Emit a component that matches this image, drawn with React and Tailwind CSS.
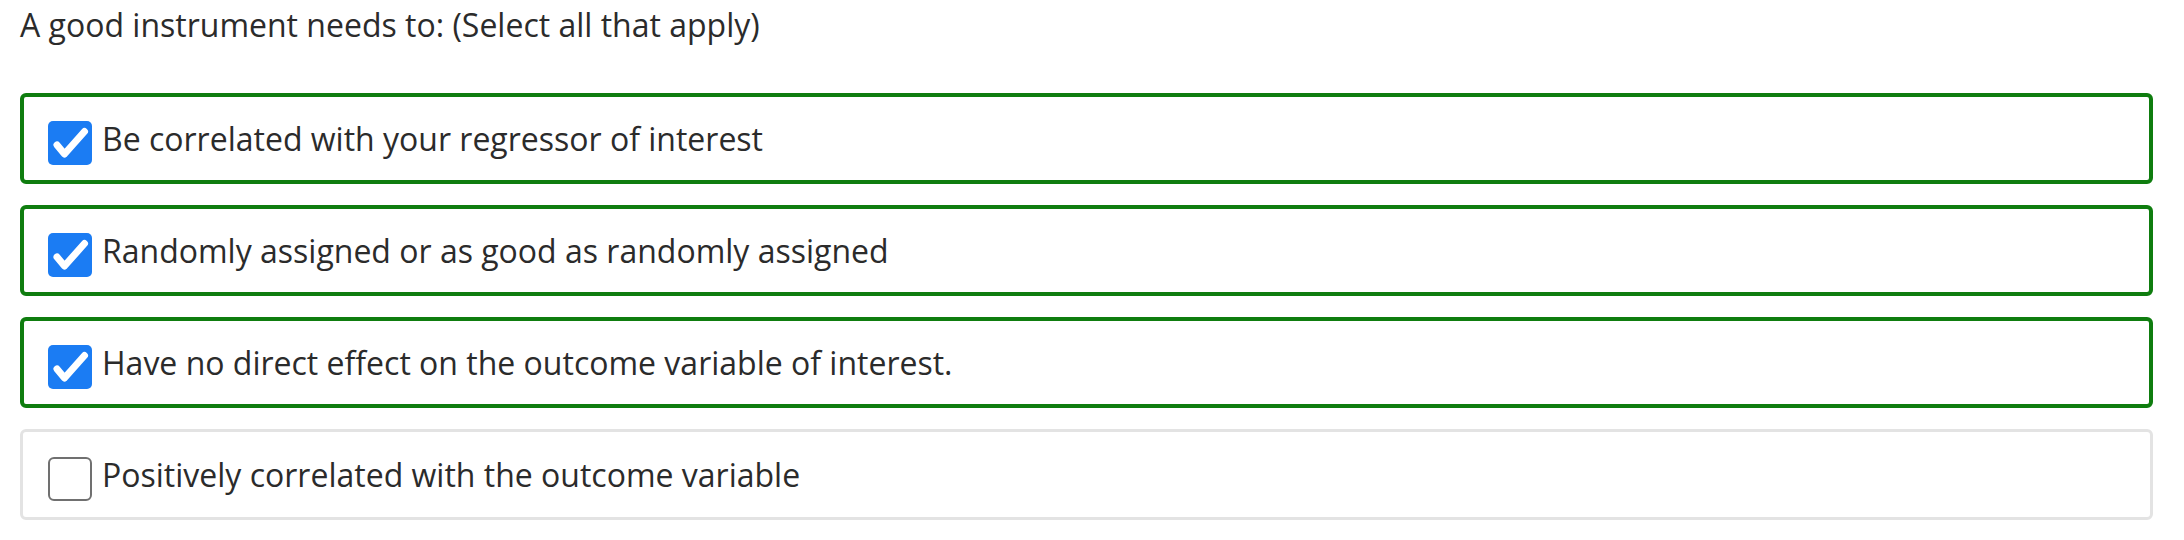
import React from 'react';

const options = [
  { label: 'Be correlated with your regressor of interest', checked: true },
  { label: 'Randomly assigned or as good as randomly assigned', checked: true },
  { label: 'Have no direct effect on the outcome variable of interest.', checked: true },
  { label: 'Positively correlated with the outcome variable', checked: false },
];

function Box({ checked }) {
  if (!checked) {
    return <span className="mt-[8px] h-[44px] w-[44px] shrink-0 rounded-[6px] border-2 border-[#707070] bg-white" />;
  }
  return (
    <span className="mt-[8px] block h-[44px] w-[44px] shrink-0 rounded-[5px] bg-[#1b7cf3]">
      <svg className="h-[44px] w-[44px]" viewBox="0 0 44 44" fill="none">
        <path d="M9 24l7.5 9L36.5 10.5" stroke="white" strokeWidth="7" strokeLinecap="round" strokeLinejoin="round" />
      </svg>
    </span>
  );
}

export default function App() {
  return (
    <div className="bg-white pl-[20px] pr-[31px] pt-[3px] pb-6 text-[#2b2b2b]" style={{ fontFamily: '"Open Sans", sans-serif' }}>
      <p className="text-[32px] leading-[44px]">A good instrument needs to: (Select all that apply)</p>
      <div className="mt-[46px] flex flex-col gap-[21px]">
        {options.map((o) => (
          <label
            key={o.label}
            className={`flex h-[91px] items-center rounded-[6px] ${o.checked ? 'border-4 border-[#0f7d0f] pl-[24px]' : 'border-[3px] border-[#e3e3e3] pl-[25px]'}`}
          >
            <Box checked={o.checked} />
            <span className="ml-[10px] text-[32px] leading-[44px]">{o.label}</span>
          </label>
        ))}
      </div>
    </div>
  );
}
